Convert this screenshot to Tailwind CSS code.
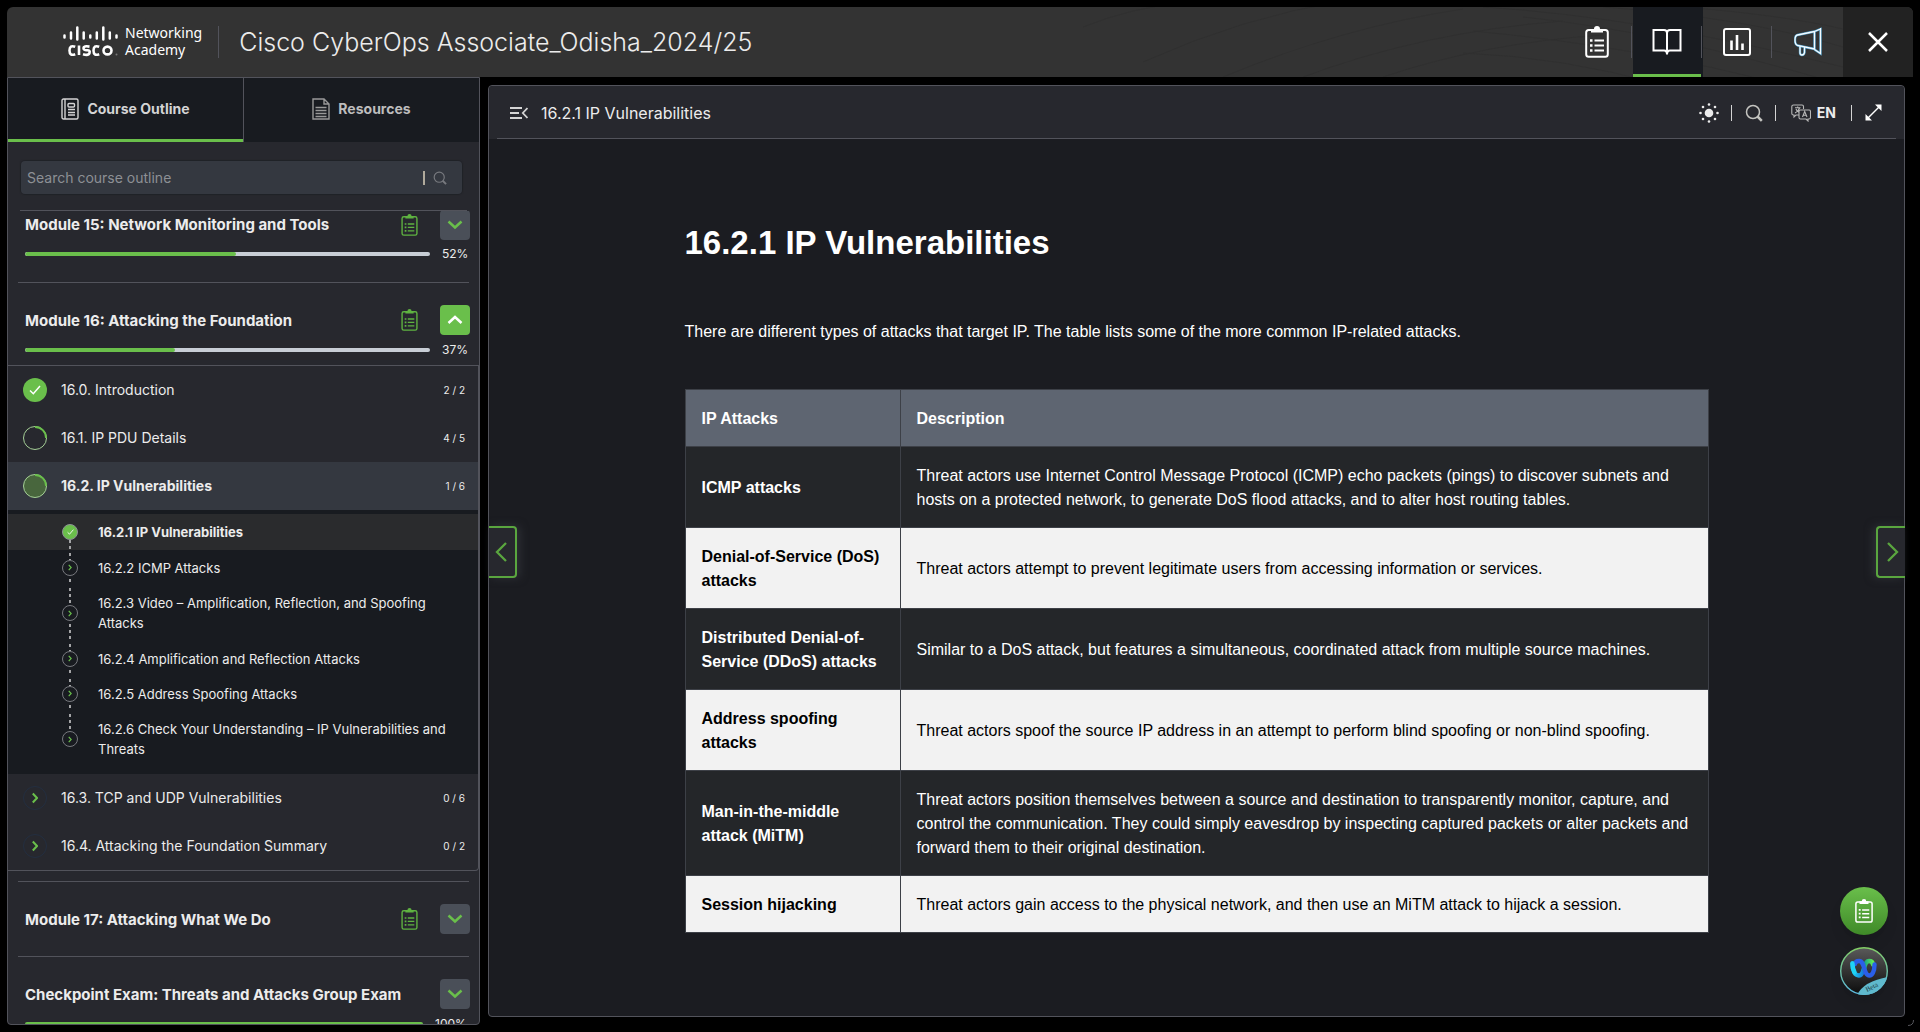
<!DOCTYPE html>
<html lang="en">
<head>
<meta charset="utf-8">
<meta name="viewport" content="width=device-width, initial-scale=1">
<title>Cisco CyberOps Associate_Odisha_2024/25</title>
<script src="https://cdn.jsdelivr.net/npm/@tailwindcss/browser@4"></script>
</head>
<body class="bg-black font-['Inter',sans-serif] text-[#ececec]">

<svg class="hidden" aria-hidden="true">
  <symbol id="clipboard" viewBox="0 0 24 32">
    <rect x="1.200" y="4" width="21.600" height="26.800" rx="2.500" fill="none" stroke="currentColor" stroke-width="2"/>
    <path d="M6 3h3a3 3 0 0 1 6 0h3v3.500H6z" fill="currentColor"/>
    <path d="M9.500 14.500H19M9.500 19.500H19M9.500 24.500H19" stroke="currentColor" stroke-width="2"/>
    <path d="M5 14.500h2.500M5 19.500h2.500M5 24.500h2.500" stroke="currentColor" stroke-width="2.400"/>
  </symbol>
  <symbol id="down" viewBox="0 0 16 10"><path d="M1.500 1.500 8 7.500l6.500-6" fill="none" stroke="currentColor" stroke-width="2.500"/></symbol>
  <symbol id="up" viewBox="0 0 16 10"><path d="M1.500 8 8 2l6.500 6" fill="none" stroke="currentColor" stroke-width="2.500"/></symbol>
  <symbol id="right" viewBox="0 0 12 20"><path d="M1 1l9 9-9 9" fill="none" stroke="currentColor" stroke-width="2.300"/></symbol>
  <symbol id="left" viewBox="0 0 12 20"><path d="M11 1l-9 9 9 9" fill="none" stroke="currentColor" stroke-width="2.300"/></symbol>
  <symbol id="chev" viewBox="0 0 6 12"><path d="M.8 1.500 5 6 .8 10.500" fill="none" stroke="currentColor" stroke-width="2"/></symbol>
  <symbol id="check" viewBox="0 0 12 10"><path d="M1 5.500 4.300 8.700 11 1" fill="none" stroke="currentColor" stroke-width="1.500"/></symbol>
  <symbol id="search" viewBox="0 0 18 18"><circle cx="8" cy="8" r="6.500" fill="none" stroke="currentColor" stroke-width="1.500"/><path d="m12.500 12.500 4.300 4.300" stroke="currentColor" stroke-width="2.500"/></symbol>
</svg>

<div class="flex h-screen flex-col p-[7px]">

  <header class="relative flex h-[70px] shrink-0 items-center overflow-hidden rounded-t-md bg-[#333333]">
    <svg class="absolute top-0 right-[70px] h-full w-[800px]" viewBox="0 0 800 70" fill="none" stroke="#303030" aria-hidden="true">
      <path d="M40 20Q90 0 140-4M100 55Q200 10 300-6M180 70Q300 20 420 2M260 70Q380 25 520 14M340 70Q440 36 560 28M440 0Q600 10 800 60M480 10Q620 24 800 78M430 24Q600 40 740 78M420 46Q520 50 620 78M560 0Q700 10 800 40M640 0Q740 8 800 22"/>
    </svg>
    <a href="#" class="ml-14 flex items-center text-white" aria-label="Cisco Networking Academy">
      <svg class="h-8 w-[55px]" viewBox="0 0 55 32" aria-hidden="true">
        <path d="M1.500 9.500v2M8 6.500v6M14.300 1.500v12M20.700 6.500v6M27.300 9.500v2M33.800 6.500v6M40.300 1.500v12M46.800 6.500v6M53.500 9.500v2" stroke="#fff" stroke-width="2.500" stroke-linecap="round"/>
        <path d="M12.200 20.800Q6.500 18.600 6.500 24.500T12.200 28.200M16 19.500V29M26.500 20.600Q20.500 19.600 20.500 22T24 24.200T26.500 27T20 28.200M36.200 20.800Q30.500 18.600 30.500 24.500T36.200 28.200" fill="none" stroke="#fff" stroke-width="2.600"/>
        <ellipse cx="44.500" cy="24.500" rx="4" ry="3.900" fill="none" stroke="#fff" stroke-width="2.600"/>
        <circle cx="53.500" cy="28.500" r="1" fill="#777"/>
      </svg>
      <span class="ml-[7px] pb-[2px] font-['Noto_Sans',sans-serif] text-sm leading-[17px]">Networking<br>Academy</span>
    </a>
    <span class="ml-4 h-8 w-px bg-[#52535b]"></span>
    <h1 class="ml-5 text-[25px] leading-8 font-light whitespace-nowrap text-[#ececec]">Cisco CyberOps Associate_Odisha_2024/25</h1>

    <nav class="relative ml-auto flex h-full text-white" aria-label="Course tools">
      <button class="flex w-[68px] items-center justify-center" aria-label="Assignments"><svg class="h-8 w-6"><use href="#clipboard"/></svg></button>
      <div class="flex w-[2px] items-center"><span class="h-8 w-px bg-[#52535b]"></span></div>
      <button class="flex w-[68px] items-center justify-center border-b-[3px] border-[#6abf4b] bg-[#181b20] pt-[3px]" aria-label="Course">
        <svg class="h-7 w-[30px]" viewBox="0 0 30 28" fill="none" stroke="currentColor" stroke-width="2" aria-hidden="true"><path d="M1.500 2H12q3 0 3 3 0-3 3-3h10.500v20.500H18q-3 0-3 4 0-4-3-4H1.500zM15 5v21"/></svg>
      </button>
      <div class="flex w-[2px] items-center bg-[#181b20]"><span class="h-8 w-px bg-[#52535b]"></span></div>
      <button class="flex w-[68px] items-center justify-center" aria-label="Grades">
        <svg class="size-7" viewBox="0 0 28 28" fill="none" stroke="currentColor" aria-hidden="true"><rect x="1" y="1" width="26" height="26" rx="2" stroke-width="2"/><path d="M8.500 12.500V22M14 7v15M19.500 15.500V22" stroke-width="2.600"/></svg>
      </button>
      <div class="flex w-[2px] items-center"><span class="h-8 w-px bg-[#52535b]"></span></div>
      <button class="flex w-[70px] items-center justify-center" aria-label="Announcements">
        <svg class="h-[30px] w-7" viewBox="0 0 28 30" fill="none" aria-hidden="true"><g stroke="#4d9bc4" stroke-width="2.400"><path id="horn" d="M20.500 4.500 3.500 8Q1 8.500 1 13t2.500 5.500L20.500 22M20.500 4v18.500M20.500 4.500l6-2.500v24.500l-6-4M26.500 1v26M6 19.500v6q0 2.500 2 2.500t2.500-2.500v-5"/></g><use href="#horn" stroke="#f4fbff" stroke-width="1.300"/></svg>
      </button>
      <button class="flex w-[70px] items-center justify-center bg-[#222222]" aria-label="Close">
        <svg class="size-5" viewBox="0 0 20 20" stroke="currentColor" stroke-width="2.500" aria-hidden="true"><path d="m1 1 18 18M19 1 1 19"/></svg>
      </button>
    </nav>
  </header>

  <div class="flex min-h-0 flex-1 gap-2">

    <aside class="flex w-[473px] shrink-0 flex-col overflow-hidden rounded-b border border-[#52535b] bg-[#27282e]">
      <div class="flex h-16 shrink-0 text-sm font-bold" role="tablist">
        <button role="tab" aria-selected="true" class="flex flex-1 items-center justify-center gap-2 border-b-[3px] border-[#6abf4b] bg-[#181b20] pt-px text-[#d4d4d4]">
          <svg class="h-[22px] w-[18px]" viewBox="0 0 18 22" fill="none" stroke="currentColor" stroke-width="1.400" aria-hidden="true"><rect x="1" y="1" width="16" height="20" rx="1.500"/><path d="M4 1v20M7 11.500h7M7 14.500h7M7 17h7"/><rect x="7" y="5.500" width="6.500" height="3.500" rx="1"/></svg>
          Course Outline
        </button>
        <button role="tab" aria-selected="false" class="flex flex-1 items-center justify-center gap-2 border-l border-[#52535b] bg-[#181b20] pb-[2px] text-[#bdbdbd]">
          <svg class="h-[22px] w-[18px]" viewBox="0 0 18 22" fill="none" stroke="#999" stroke-width="1.400" aria-hidden="true"><path d="M1 1h11l5 5v15H1zM12 1v5h5M3.500 9.500h11M3.500 12.500h11M3.500 15.500h11M3.500 18.500h11"/></svg>
          Resources
        </button>
      </div>

      <div class="mt-[19px] mr-[17px] mb-4 ml-[13px] flex h-[33px] shrink-0 items-center rounded-sm bg-[#343840] px-[6px] shadow-[0_0_1px_1px_#202227]">
        <label for="outline-search" class="sr-only">Search course outline</label>
        <input id="outline-search" type="text" placeholder="Search course outline" class="h-full min-w-0 flex-1 bg-transparent text-sm placeholder-[#8d9095] outline-none">
        <span class="h-[14px] w-[2px] bg-[#b0aa9c]"></span>
        <button class="mr-[9px] ml-2 text-[#77797e]" aria-label="Search"><svg class="size-[14px]"><use href="#search"/></svg></button>
      </div>

      <div class="mx-3 h-px shrink-0 bg-[#52535b]"></div>

      <div class="min-h-0 flex-1 overflow-hidden">
        <section class="-mt-px pr-[9px] pb-5 pl-[17px]">
          <div class="flex h-[30px] items-center">
            <h2 class="flex-1 pt-px text-[15px] font-bold">Module 15: Network Monitoring and Tools</h2>
            <svg class="mr-[22px] h-[22px] w-[17px] text-[#5fb341]"><use href="#clipboard"/></svg>
            <button class="flex size-[30px] items-center justify-center rounded-sm bg-[#4a4f58] text-[#6abf4b]" aria-label="Expand module 15"><svg class="h-[10px] w-4"><use href="#down"/></svg></button>
          </div>
          <div class="mt-[6px] flex h-4 items-center gap-3">
            <div class="h-1 flex-1 overflow-hidden rounded-sm bg-[#c8ced6]"><div class="h-full rounded-sm bg-[#6abf4b]" style="width:52%"></div></div>
            <span class="w-7 text-xs">52%</span>
          </div>
        </section>

        <section>
          <div class="mx-[10px] h-px bg-[#52535b]"></div>
          <div class="pt-[22px] pr-[9px] pb-[7px] pl-[17px]">
            <div class="flex h-[30px] items-center">
              <h2 class="flex-1 pt-[2px] text-[15px] font-bold">Module 16: Attacking the Foundation</h2>
              <svg class="mr-[22px] h-[22px] w-[17px] text-[#5fb341]"><use href="#clipboard"/></svg>
              <button class="flex size-[30px] items-center justify-center rounded-sm bg-[#6abf4b] text-white" aria-label="Collapse module 16"><svg class="h-[10px] w-4"><use href="#up"/></svg></button>
            </div>
            <div class="mt-[7px] flex h-4 items-center gap-3">
              <div class="h-1 flex-1 overflow-hidden rounded-sm bg-[#c8ced6]"><div class="h-full rounded-sm bg-[#6abf4b]" style="width:37%"></div></div>
              <span class="w-7 text-xs">37%</span>
            </div>
          </div>

          <div class="mb-[10px] rounded-br border-y border-r border-[#52535b]">
            <a href="#" class="flex h-12 items-center pr-[13px] pl-[15px]">
              <span class="flex size-6 items-center justify-center rounded-full bg-[#6abf4b] text-white"><svg class="h-[10px] w-3"><use href="#check"/></svg></span>
              <span class="ml-[14px] flex-1 text-sm">16.0. Introduction</span><span class="text-[10px]">2 / 2</span>
            </a>
            <a href="#" class="flex h-12 items-center pr-[13px] pl-[15px]">
              <svg class="size-6" viewBox="0 0 24 24" fill="none" aria-hidden="true"><circle cx="12" cy="12" r="11.500" stroke="#a5cf97"/><path d="M12 1a11 11 0 0 1 11 11" stroke="#6abf4b" stroke-width="1.800"/></svg>
              <span class="ml-[14px] flex-1 text-sm">16.1. IP PDU Details</span><span class="text-[10px]">4 / 5</span>
            </a>
            <a href="#" class="flex h-12 items-center bg-[#343840] pr-[13px] pl-[15px]">
              <svg class="size-6" viewBox="0 0 24 24" fill="#48663d" aria-hidden="true"><circle cx="12" cy="12" r="11.500" stroke="#a5cf97"/><path d="M12 1a11 11 0 0 1 11 11" fill="none" stroke="#6abf4b" stroke-width="1.800"/></svg>
              <span class="ml-[14px] flex-1 text-sm font-bold">16.2. IP Vulnerabilities</span><span class="text-[10px]">1 / 6</span>
            </a>

            <ol class="bg-[#181b20] pt-1 pb-[7px] text-[13px] leading-5">
              <li class="bg-[#2a2b2d] font-bold"><a href="#" class="flex pl-[54px]">
                <span class="flex w-4 flex-col items-center pt-[10px]"><span class="flex size-4 shrink-0 items-center justify-center rounded-full border border-[#8d9095] bg-[#6abf4b] text-white"><svg class="h-[6px] w-[7px]"><use href="#check"/></svg></span><span class="w-[2px] flex-1 bg-[repeating-linear-gradient(to_bottom,#a4a5a7_0_3px,transparent_3px_6px)]"></span></span>
                <span class="ml-5 flex-1 py-2 pr-10">16.2.1 IP Vulnerabilities</span></a></li>
              <li><a href="#" class="flex pl-[54px]">
                <span class="flex w-4 flex-col items-center"><span class="w-[2px] flex-1 bg-[repeating-linear-gradient(to_bottom,transparent_0_3px,#a4a5a7_3px_6px)]"></span><span class="flex size-4 shrink-0 items-center justify-center rounded-full border border-[#77797e] text-[#6abf4b]"><svg class="h-[7px] w-1"><use href="#chev"/></svg></span><span class="w-[2px] flex-1 bg-[repeating-linear-gradient(to_bottom,transparent_0_3px,#a4a5a7_3px_6px)]"></span></span>
                <span class="ml-5 flex-1 pt-2 pr-6 pb-[7px]">16.2.2 ICMP Attacks</span></a></li>
              <li><a href="#" class="flex pl-[54px]">
                <span class="flex w-4 flex-col items-center"><span class="w-[2px] flex-1 bg-[repeating-linear-gradient(to_bottom,transparent_0_3px,#a4a5a7_3px_6px)]"></span><span class="flex size-4 shrink-0 items-center justify-center rounded-full border border-[#77797e] text-[#6abf4b]"><svg class="h-[7px] w-1"><use href="#chev"/></svg></span><span class="w-[2px] flex-1 bg-[repeating-linear-gradient(to_bottom,transparent_0_3px,#a4a5a7_3px_6px)]"></span></span>
                <span class="ml-5 flex-1 py-2 pr-6">16.2.3 Video – Amplification, Reflection, and Spoofing<br>Attacks</span></a></li>
              <li><a href="#" class="flex pl-[54px]">
                <span class="flex w-4 flex-col items-center"><span class="w-[2px] flex-1 bg-[repeating-linear-gradient(to_bottom,transparent_0_3px,#a4a5a7_3px_6px)]"></span><span class="flex size-4 shrink-0 items-center justify-center rounded-full border border-[#77797e] text-[#6abf4b]"><svg class="h-[7px] w-1"><use href="#chev"/></svg></span><span class="w-[2px] flex-1 bg-[repeating-linear-gradient(to_bottom,transparent_0_3px,#a4a5a7_3px_6px)]"></span></span>
                <span class="ml-5 flex-1 pt-2 pr-6 pb-[7px]">16.2.4 Amplification and Reflection Attacks</span></a></li>
              <li><a href="#" class="flex pl-[54px]">
                <span class="flex w-4 flex-col items-center"><span class="w-[2px] flex-1 bg-[repeating-linear-gradient(to_bottom,transparent_0_3px,#a4a5a7_3px_6px)]"></span><span class="flex size-4 shrink-0 items-center justify-center rounded-full border border-[#77797e] text-[#6abf4b]"><svg class="h-[7px] w-1"><use href="#chev"/></svg></span><span class="w-[2px] flex-1 bg-[repeating-linear-gradient(to_bottom,transparent_0_3px,#a4a5a7_3px_6px)]"></span></span>
                <span class="ml-5 flex-1 pt-2 pr-6 pb-[7px]">16.2.5 Address Spoofing Attacks</span></a></li>
              <li><a href="#" class="flex pl-[54px]">
                <span class="flex w-4 flex-col items-center"><span class="w-[2px] flex-1 bg-[repeating-linear-gradient(to_bottom,transparent_0_3px,#a4a5a7_3px_6px)]"></span><span class="flex size-4 shrink-0 items-center justify-center rounded-full border border-[#77797e] text-[#6abf4b]"><svg class="h-[7px] w-1"><use href="#chev"/></svg></span><span class="w-[2px] flex-1"></span></span>
                <span class="ml-5 flex-1 py-2 pr-6">16.2.6 Check Your Understanding – IP Vulnerabilities and<br>Threats</span></a></li>
            </ol>

            <a href="#" class="flex h-12 items-center pr-[13px] pl-[15px]">
              <span class="flex size-6 items-center justify-center rounded-full border border-[#232e40] text-[#6abf4b]"><svg class="h-3 w-[6px]"><use href="#chev"/></svg></span>
              <span class="ml-[14px] flex-1 text-sm">16.3. TCP and UDP Vulnerabilities</span><span class="text-[10px]">0 / 6</span>
            </a>
            <a href="#" class="flex h-12 items-center pr-[13px] pl-[15px]">
              <span class="flex size-6 items-center justify-center rounded-full border border-[#232e40] text-[#6abf4b]"><svg class="h-3 w-[6px]"><use href="#chev"/></svg></span>
              <span class="ml-[14px] flex-1 text-sm">16.4. Attacking the Foundation Summary</span><span class="text-[10px]">0 / 2</span>
            </a>
          </div>
        </section>

        <section>
          <div class="mx-[10px] h-px bg-[#52535b]"></div>
          <div class="flex items-center py-[22px] pr-[9px] pl-[17px]">
            <h2 class="flex-1 pt-[2px] text-[15px] font-bold">Module 17: Attacking What We Do</h2>
            <svg class="mr-[22px] h-[22px] w-[17px] text-[#5fb341]"><use href="#clipboard"/></svg>
            <button class="flex size-[30px] items-center justify-center rounded-sm bg-[#4a4f58] text-[#6abf4b]" aria-label="Expand module 17"><svg class="h-[10px] w-4"><use href="#down"/></svg></button>
          </div>
        </section>

        <section>
          <div class="mx-[10px] h-px bg-[#52535b]"></div>
          <div class="pt-[22px] pr-[9px] pl-[17px]">
            <div class="flex h-[30px] items-center">
              <h2 class="flex-1 pt-[2px] text-[15px] font-bold">Checkpoint Exam: Threats and Attacks Group Exam</h2>
              <button class="flex size-[30px] items-center justify-center rounded-sm bg-[#4a4f58] text-[#6abf4b]" aria-label="Expand checkpoint exam"><svg class="h-[10px] w-4"><use href="#down"/></svg></button>
            </div>
            <div class="mt-[7px] flex h-4 items-center gap-3">
              <div class="h-1 flex-1 rounded-sm bg-[#6abf4b]"></div>
              <span class="w-[35px] text-xs">100%</span>
            </div>
          </div>
        </section>
      </div>
    </aside>

    <main class="relative mt-2 mr-2 mb-2 flex min-w-0 flex-1 flex-col rounded border border-[#52535b] bg-[#1b1c21]">
      <div class="flex h-[53px] shrink-0 flex-col rounded-t bg-[#27282e] px-2">
        <div class="flex flex-1 items-center border-b border-[#52535b] pt-px pr-[14px] pl-[13px]">
          <button aria-label="Hide outline"><svg class="h-3 w-[18px]" viewBox="0 0 18 12" fill="none" stroke="#d4d4d4" stroke-width="1.800" aria-hidden="true"><path d="M0 1h12M0 6h9M0 11h12M17.500 1 12.800 6l4.700 5"/></svg></button>
          <h2 class="ml-[13px] flex-1 text-base">16.2.1 IP Vulnerabilities</h2>
          <button aria-label="Brightness"><svg class="size-5" viewBox="0 0 20 20" fill="#ececec" aria-hidden="true"><circle cx="10" cy="10" r="4.300"/><circle cx="10" cy="1.500" r="1.300"/><circle cx="10" cy="18.500" r="1.300"/><circle cx="1.500" cy="10" r="1.300"/><circle cx="18.500" cy="10" r="1.300"/><circle cx="4" cy="4" r="1.300"/><circle cx="16" cy="4" r="1.300"/><circle cx="4" cy="16" r="1.300"/><circle cx="16" cy="16" r="1.300"/></svg></button>
          <span class="mx-3 h-4 w-px bg-[#d4d4d4]"></span>
          <button class="ml-px text-[#c4c4c0]" aria-label="Search page"><svg class="size-[18px]"><use href="#search"/></svg></button>
          <span class="mr-[15px] ml-3 h-4 w-px bg-[#d4d4d4]"></span>
          <button class="flex items-center gap-[6px] text-sm font-bold" aria-label="Language: EN">
            <svg class="h-[18px] w-5" viewBox="0 0 20 18" fill="none" stroke="#b8b8b8" stroke-width="1.100" aria-hidden="true"><path d="M8 11H5l-2 2v-2H2.500Q.8 11 .8 9.500v-7Q.8 1 2.500 1H11q1.500 0 1.500 1.500V5M9.500 6H18q1.500 0 1.500 1.500v6Q19.500 15 18 15h-1v2l-2-2H9.500Q8 15 8 13.500v-6Q8 6 9.500 6zM4 3.800h5.500M6.700 2.500v1.300M8.500 4Q7.500 7.500 4 9M5 5q.8 2 2.500 3M11.500 13l2.200-5.500 2.300 5.500M12.300 11.200H15.200"/></svg>
            EN</button>
          <span class="mr-[13px] ml-[15px] h-4 w-px bg-[#d4d4d4]"></span>
          <button aria-label="Full screen"><svg class="size-[17px]" viewBox="0 0 17 17" aria-hidden="true"><path d="M3 14 14 3" stroke="#fff" stroke-width="1.500"/><path d="M10 .5h6.500V7zM7 16.500H.5V10z" fill="#fff"/></svg></button>
        </div>
      </div>

      <article class="mx-auto w-full max-w-[1024px] pt-20 font-['Liberation_Sans',sans-serif] text-white">
        <h3 class="text-[33px] leading-12 font-bold">16.2.1 IP Vulnerabilities</h3>
        <p class="mt-[53px] leading-6">There are different types of attacks that target IP. The table lists some of the more common IP-related attacks.</p>
        <table class="mt-[45px] w-full table-fixed border-collapse text-left leading-6 [&_td]:border [&_td]:border-[#3d4047] [&_td]:px-4 [&_td]:pt-[17px] [&_td]:pb-[15px] [&_th]:border [&_th]:border-[#3d4047] [&_th]:px-4 [&_th]:pt-[17px] [&_th]:pb-[15px]">
          <thead class="bg-[#5e6571]"><tr><th scope="col" class="w-[215px]">IP Attacks</th><th scope="col">Description</th></tr></thead>
          <tbody>
            <tr class="bg-[#242629]"><th scope="row">ICMP attacks</th><td>Threat actors use Internet Control Message Protocol (ICMP) echo packets (pings) to discover subnets and hosts on a protected network, to generate DoS flood attacks, and to alter host routing tables.</td></tr>
            <tr class="bg-[#f2f2f2] text-black"><th scope="row">Denial-of-Service (DoS) attacks</th><td>Threat actors attempt to prevent legitimate users from accessing information or services.</td></tr>
            <tr class="bg-[#242629]"><th scope="row">Distributed Denial-of-Service (DDoS) attacks</th><td>Similar to a DoS attack, but features a simultaneous, coordinated attack from multiple source machines.</td></tr>
            <tr class="bg-[#f2f2f2] text-black"><th scope="row">Address spoofing attacks</th><td>Threat actors spoof the source IP address in an attempt to perform blind spoofing or non-blind spoofing.</td></tr>
            <tr class="bg-[#242629]"><th scope="row">Man-in-the-middle attack (MiTM)</th><td>Threat actors position themselves between a source and destination to transparently monitor, capture, and control the communication. They could simply eavesdrop by inspecting captured packets or alter packets and forward them to their original destination.</td></tr>
            <tr class="bg-[#f2f2f2] text-black"><th scope="row">Session hijacking</th><td>Threat actors gain access to the physical network, and then use an MiTM attack to hijack a session.</td></tr>
          </tbody>
        </table>
      </article>

      <div class="absolute inset-y-0 left-0 flex items-center pt-[2px]">
        <button class="flex h-[52px] w-7 items-center justify-center rounded-r border-2 border-l-0 border-[#5aa63f] bg-[#27282e] pr-[2px] text-[#5aa63f] shadow-[3px_0_8px_#2e3036]" aria-label="Previous page"><svg class="h-5 w-3"><use href="#left"/></svg></button>
      </div>
      <div class="absolute inset-y-0 -right-px flex items-center pt-[2px]">
        <button class="flex h-[52px] w-[29px] items-center justify-center rounded-l border-2 border-r-0 border-[#5aa63f] bg-[#27282e] pl-[3px] text-[#5aa63f] shadow-[-3px_0_8px_#2e3036]" aria-label="Next page"><svg class="h-5 w-3"><use href="#right"/></svg></button>
      </div>

      <div class="absolute right-4 bottom-[21px] flex flex-col gap-3">
        <button class="flex size-12 items-center justify-center rounded-full bg-linear-to-b from-[#6abf4b] to-[#3f8a28] text-white shadow-lg" aria-label="Tasks"><svg class="h-6 w-[18px]"><use href="#clipboard"/></svg></button>
        <button class="size-12 rounded-full shadow-lg" aria-label="Webex assistant, Beta">
          <svg class="size-12" viewBox="0 0 48 48" aria-hidden="true">
            <defs>
              <linearGradient id="disc" x2="0" y2="1"><stop stop-color="#5a5a5a"/><stop offset="1" stop-color="#0c0c0c"/></linearGradient>
              <linearGradient id="ring" x2="0" y2="1"><stop stop-color="#83cd65"/><stop offset="1" stop-color="#5bb8e0"/></linearGradient>
              <linearGradient id="cyan" x2="1" y2="0"><stop stop-color="#1fd3f5"/><stop offset="1" stop-color="#1678d8"/></linearGradient>
              <linearGradient id="green" x2="1" y2="0"><stop stop-color="#159b86"/><stop offset="1" stop-color="#62ee55"/></linearGradient>
              <clipPath id="inside"><circle cx="24" cy="24" r="24"/></clipPath>
            </defs>
            <circle cx="24" cy="24" r="23.300" fill="url(#disc)" stroke="url(#ring)" stroke-width="1.400"/>
            <path d="M17 48Q24 34 48 30v18z" fill="#5fb9cd" clip-path="url(#inside)"/>
            <g fill="none" stroke-width="4.400" stroke-linecap="round">
              <path d="M12.500 16.500C12.500 24 15 28.500 19 28.500q3 0 4.500-6" stroke="url(#cyan)"/>
              <path d="M24 22q1.500-8 5-8 3.500 0 4 3.500" stroke="url(#green)"/>
              <path d="M34.500 17.500C34.500 25 32 28.500 29.500 28.500c-6.500 0-4-14.500-10.500-14.500q-3.500 0-4 3" stroke="#2a5fe8"/>
              <path d="M12.500 16.500q0 5 2 8.500" stroke="#1fd3f5"/>
            </g>
            <text x="27" y="45" transform="rotate(-27 27 45)" font-family="Liberation Serif, serif" font-size="7" fill="#1b3a42">Beta</text>
          </svg>
        </button>
      </div>
    </main>
  </div>
  <svg class="absolute right-[6px] bottom-[6px] size-[6px]" viewBox="0 0 6 6" fill="none" stroke="#55565c" aria-hidden="true"><path d="M5.500 0Q5.500 5.500 0 5.500"/></svg>
</div>
</body>
</html>
